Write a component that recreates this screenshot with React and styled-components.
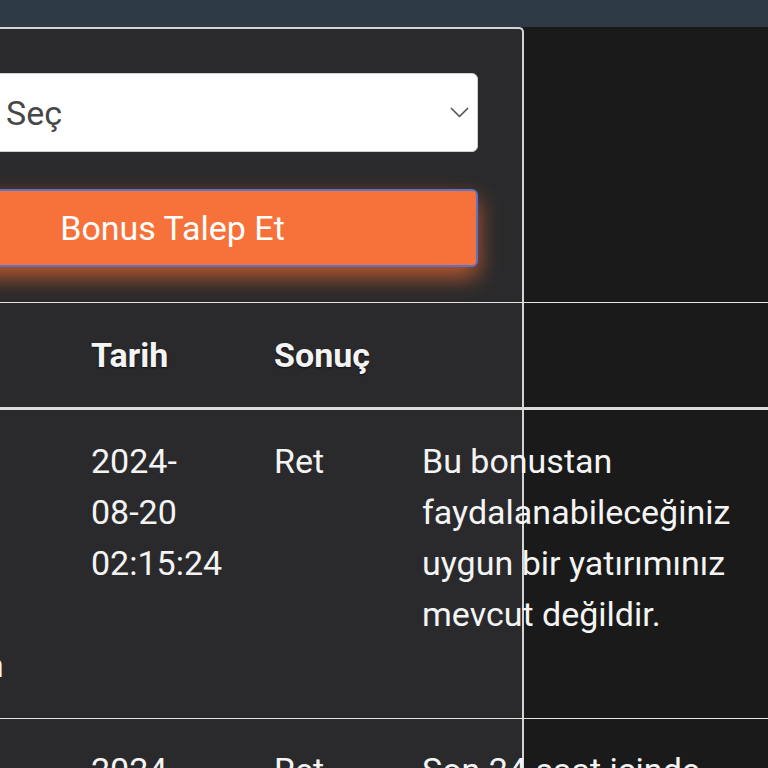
import React from "react";
import styled, { createGlobalStyle } from "styled-components";

const GlobalStyle = createGlobalStyle`
  html, body {
    margin: 0;
    padding: 0;
    background: #1a1a1a;
  }
  body {
    font-family: Roboto, "Noto Sans", Arial, sans-serif;
    overflow: hidden;
  }
  * { box-sizing: border-box; }
`;

const Page = styled.div`
  width: 768px;
  height: 768px;
  overflow: hidden;
  background: #1a1a1a;
  display: flex;
  flex-direction: column;
`;

const TopBar = styled.header`
  flex: none;
  height: 27px;
  background: #2e3a46;
`;

const Card = styled.section`
  flex: none;
  margin-left: -160px;
  width: 684px;
  min-height: 900px;
  background: #2a2a2c;
  border: 2px solid #d4d4d4;
  border-bottom: none;
  border-radius: 5px 5px 0 0;
`;

const Form = styled.form`
  display: flex;
  flex-direction: column;
  gap: 37px;
  padding: 44px 44px 0 25px;
`;

const SelectBox = styled.div`
  height: 79px;
  display: flex;
  align-items: center;
  justify-content: space-between;
  padding: 0 8px 0 138px;
  background: #ffffff;
  border: 1px solid #cfcfcf;
  border-radius: 6px;
  font-size: 34px;
  color: #474747;
`;

const Chevron = styled.svg`
  width: 19px;
  height: 11px;
  flex: none;
`;

const SubmitButton = styled.button`
  height: 78px;
  width: 100%;
  background: #f7723a;
  border: 2px solid #5a73c6;
  border-radius: 6px;
  color: #ffffff;
  font-family: inherit;
  font-size: 34px;
  box-shadow: 0 10px 22px rgba(250, 108, 48, 0.7);
`;

const Table = styled.table`
  margin: 35px 0 0 -3px;
  width: 951px;
  table-layout: fixed;
  border-collapse: collapse;
  color: #f4f4f4;
  font-size: 34px;
  line-height: 51px;
`;

const Col = styled.col`
  width: ${(p) => p.$w}px;
`;

const Th = styled.th`
  text-align: left;
  font-weight: 700;
  padding: 27px 12px 26px;
  border-top: 1px solid #e4e4e4;
  border-bottom: 3px solid #dcdcdc;
  vertical-align: bottom;
  text-shadow: 0 1px 2px rgba(0, 0, 0, 0.6);
`;

const Td = styled.td`
  padding: 26px 12px 27px;
  border-top: 1px solid #e4e4e4;
  vertical-align: top;
  font-weight: 400;
`;

const NoWrap = styled.span`
  white-space: nowrap;
`;

const rows = [
  {
    name: ["Haftalık", "Casino", "Yatırım", "Bonusu", "Hoşgeldin"],
    date: ["2024-", "08-20", "02:15:24"],
    result: "Ret",
    note: "Bu bonustan faydalanabileceğiniz uygun bir yatırımınız mevcut değildir.",
  },
  {
    name: ["Casino", "Yatırım", "Bonusu"],
    date: ["2024-", "08-19", "22:41:07"],
    result: "Ret",
    note: "Son 24 saat içinde zaten bir bonus talebiniz bulunmaktadır.",
  },
];

export default function App() {
  return (
    <Page>
      <GlobalStyle />
      <TopBar />
      <Card>
        <Form onSubmit={(e) => e.preventDefault()}>
          <SelectBox>
            <span>Seç</span>
            <Chevron viewBox="0 0 19 11" fill="none">
              <polyline
                points="1.5,1.5 9.5,9.5 17.5,1.5"
                stroke="#555"
                strokeWidth="1.7"
                strokeLinecap="round"
                strokeLinejoin="round"
              />
            </Chevron>
          </SelectBox>
          <SubmitButton type="submit">Bonus Talep Et</SubmitButton>
        </Form>
        <Table>
          <colgroup>
            <Col $w={240} />
            <Col $w={183} />
            <Col $w={148} />
            <Col $w={380} />
          </colgroup>
          <thead>
            <tr>
              <Th>Bonus</Th>
              <Th>Tarih</Th>
              <Th>Sonuç</Th>
              <Th></Th>
            </tr>
          </thead>
          <tbody>
            {rows.map((r, i) => (
              <tr key={i}>
                <Td>
                  {r.name.map((w, j) => (
                    <React.Fragment key={j}>
                      {j > 0 && <br />}
                      {w}
                    </React.Fragment>
                  ))}
                </Td>
                <Td>
                  <NoWrap>{r.date[0]}</NoWrap>
                  <wbr />
                  <NoWrap>{r.date[1]}</NoWrap> <NoWrap>{r.date[2]}</NoWrap>
                </Td>
                <Td>{r.result}</Td>
                <Td>{r.note}</Td>
              </tr>
            ))}
          </tbody>
        </Table>
      </Card>
    </Page>
  );
}
